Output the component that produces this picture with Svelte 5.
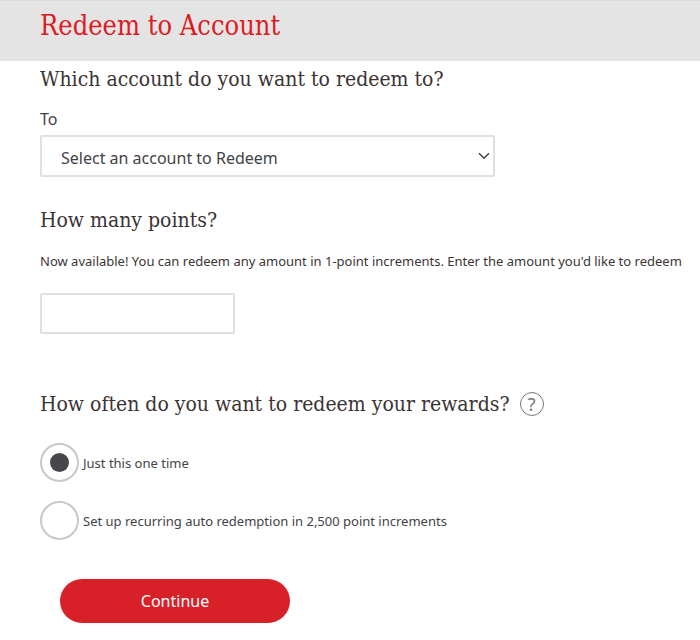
<script>
  let account = $state('');
  let points = $state('');
  let frequency = $state('once');
</script>

<main>
  <header>
    <h1>Redeem to Account</h1>
  </header>

  <form onsubmit={(event) => event.preventDefault()}>
    <section class="account">
      <h2>Which account do you want to redeem to?</h2>
      <label for="account">To</label>
      <div class="select">
        <select id="account" bind:value={account}>
          <option value="">Select an account to Redeem</option>
        </select>
        <svg viewBox="0 0 12 8" aria-hidden="true">
          <path d="M1 1.2 L6 6.2 L11 1.2" />
        </svg>
      </div>
    </section>

    <section class="points">
      <h2>How many points?</h2>
      <label for="points">Now available! You can redeem any amount in 1-point increments. Enter the amount you'd like to redeem</label>
      <input id="points" type="text" inputmode="numeric" bind:value={points} />
    </section>

    <section class="often">
      <div class="question">
        <h2 id="often-title">How often do you want to redeem your rewards?</h2>
        <button type="button" class="help">?</button>
      </div>
      <div class="choices" role="radiogroup" aria-labelledby="often-title">
        <label>
          <input type="radio" name="frequency" value="once" bind:group={frequency} />
          Just this one time
        </label>
        <label>
          <input type="radio" name="frequency" value="recurring" bind:group={frequency} />
          Set up recurring auto redemption in 2,500 point increments
        </label>
      </div>
    </section>

    <button type="submit" class="continue">Continue</button>
  </form>
</main>

<style>
  :global(body) {
    margin: 0;
    background: #fff;
  }

  main {
    color: #3b3434;
    font-family: 'Noto Sans', sans-serif;
    font-size: 13px;
    line-height: 20px;
  }

  header {
    padding: 8px 40px 19px;
    background: #e4e4e4;
    border-top: 1px solid #dcdcdc;
  }

  h1,
  h2 {
    margin: 0;
    font-family: 'DejaVu Serif Condensed', 'DejaVu Serif', serif;
    font-weight: 400;
  }

  h1 {
    color: #db1c25;
    font-size: 27px;
    line-height: 33px;
  }

  h2 {
    font-size: 21px;
    line-height: 28px;
  }

  form {
    padding: 4px 12px 16px 40px;
  }

  section {
    display: flex;
    flex-direction: column;
    align-items: flex-start;
  }

  .account label {
    margin: 14px 0 4px;
    color: #414347;
    font-size: 16px;
    line-height: 24px;
  }

  .select {
    position: relative;
    width: 100%;
    max-width: 455px;
  }

  select,
  input[type='text'] {
    box-sizing: border-box;
    border: 2px solid #dde1e1;
    border-radius: 2px;
    background: #fff;
    color: #414347;
    font-family: inherit;
    font-size: 16px;
  }

  select {
    display: block;
    width: 100%;
    height: 42px;
    padding: 4px 36px 0 19px;
    appearance: none;
  }

  .select svg {
    position: absolute;
    top: 17px;
    right: 5px;
    width: 12px;
    height: 8px;
    fill: none;
    stroke: #414347;
    stroke-width: 1.5;
    pointer-events: none;
  }

  .points {
    margin-top: 29px;
  }

  .points label {
    margin: 17px 0 22px;
  }

  input[type='text'] {
    width: 195px;
    height: 41px;
    padding: 0 12px;
  }

  .often {
    margin-top: 56px;
  }

  .question {
    display: flex;
    align-items: center;
    gap: 10px;
  }

  .help {
    flex: none;
    box-sizing: border-box;
    width: 24px;
    height: 24px;
    padding: 0;
    border: 1px solid #777;
    border-radius: 50%;
    background: #fff;
    color: #777;
    font-family: inherit;
    font-size: 18px;
    line-height: 22px;
  }

  .choices {
    display: flex;
    flex-direction: column;
    gap: 19px;
    margin-top: 25px;
  }

  .choices label {
    display: flex;
    align-items: center;
    gap: 4px;
    color: #414347;
  }

  input[type='radio'] {
    flex: none;
    display: grid;
    place-items: center;
    box-sizing: border-box;
    width: 39px;
    height: 39px;
    margin: 0;
    border: 2px solid #c7c7cc;
    border-radius: 50%;
    background: #fff;
    appearance: none;
  }

  input[type='radio']:checked::before {
    content: '';
    width: 19px;
    height: 19px;
    border-radius: 50%;
    background: #46474b;
  }

  .continue {
    display: block;
    width: 230px;
    height: 44px;
    margin: 39px 0 0 20px;
    padding: 0;
    border: 0;
    border-radius: 22px;
    background: #d82028;
    color: #fff;
    font-family: inherit;
    font-size: 16px;
  }
</style>
